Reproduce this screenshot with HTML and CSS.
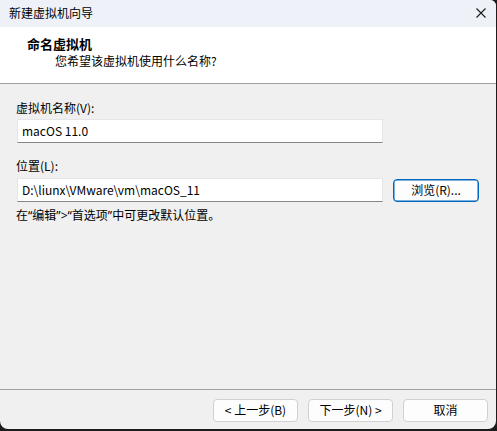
FILE: index.html
```html
<!DOCTYPE html>
<html lang="zh-CN">
<head>
<meta charset="utf-8">
<title>新建虚拟机向导</title>
<link rel="stylesheet" href="styles.css">
</head>
<body>
<div class="window">
  <div class="titlebar">
    <span class="title">新建虚拟机向导</span>
    <svg class="close" width="10" height="10" viewBox="0 0 10 10"><path d="M0.5 0.5 L9.5 9.5 M9.5 0.5 L0.5 9.5" stroke="#1a1a1a" stroke-width="1.1" fill="none"/></svg>
  </div>
  <div class="header">
    <div class="h-title">命名虚拟机</div>
    <div class="h-sub">您希望该虚拟机使用什么名称?</div>
  </div>
  <div class="content">
    <div class="label first">虚拟机名称(V):</div>
    <div class="row">
      <div class="input">macOS 11.0</div>
    </div>
    <div class="label second">位置(L):</div>
    <div class="row">
      <div class="input">D:\liunx\VMware\vm\macOS_11</div>
      <div class="btn browse">浏览(R)...</div>
    </div>
    <div class="note">在<span class="q">“</span>编辑<span class="q">”&gt;“</span>首选项<span class="q">”</span>中可更改默认位置。</div>
  </div>
  <div class="footer">
    <div class="btn">&lt; 上一步(B)</div>
    <div class="btn">下一步(N) &gt;</div>
    <div class="btn">取消</div>
  </div>
</div>
</body>
</html>
```

FILE: styles.css
```css
html, body {
  margin: 0;
  padding: 0;
  background: #1c1c1c;
}
body {
  width: 497px;
  height: 431px;
  overflow: hidden;
  font-family: "Noto Sans CJK SC", "Noto Sans", sans-serif;
  font-size: 12px;
  color: #000;
}
.window {
  width: 496px;
  height: 429px;
  background: #f0f0f0;
  border-radius: 0 6px 8px 8px;
  overflow: hidden;
  display: flex;
  flex-direction: column;
}
.titlebar {
  height: 27px;
  flex: none;
  background: #eef1f8;
  display: flex;
  align-items: center;
  padding-left: 9px;
  padding-right: 10px;
  box-sizing: border-box;
}
.title {
  flex: 1;
  line-height: 16px;
  margin-top: -1px;
}
.close {
  display: block;
  margin-top: -1px;
}
.header {
  height: 57px;
  flex: none;
  box-sizing: border-box;
  background: #fff;
  border-bottom: 1px solid #a0a0a0;
  padding-top: 8px;
}
.h-title {
  font-weight: bold;
  font-size: 13px;
  line-height: 17px;
  padding-left: 27px;
}
.h-sub {
  line-height: 17px;
  padding-left: 55px;
}
.content {
  flex: 1;
  padding-left: 16px;
}
.label {
  line-height: 16px;
}
.label.first {
  margin-top: 16px;
  margin-bottom: 3px;
}
.label.second {
  margin-top: 15px;
  margin-bottom: 4px;
}
.row {
  display: flex;
  align-items: center;
  gap: 10px;
}
.input {
  width: 366px;
  height: 24px;
  box-sizing: border-box;
  margin-left: 1px;
  background: #fff;
  border: 1px solid #e6e6e6;
  border-bottom-color: #868686;
  padding-left: 4px;
  line-height: 21px;
}
.btn {
  width: 85px;
  height: 23px;
  box-sizing: border-box;
  background: #fdfdfd;
  border: 1px solid #d0d0d0;
  border-radius: 4px;
  text-align: center;
  line-height: 20px;
}
.browse {
  border-color: #0067c0;
  box-shadow: inset 0 0 0 0.5px #0067c0;
  height: 23px;
  width: 86px;
}
.note {
  margin-top: 5px;
  line-height: 16px;
}
.q {
  font-family: "Noto Sans", "DejaVu Sans", sans-serif;
}
.footer {
  height: 40px;
  flex: none;
  box-sizing: border-box;
  border-top: 1px solid #a0a0a0;
  display: flex;
  justify-content: flex-end;
  padding-top: 9px;
  padding-right: 8px;
  gap: 10px;
}
```
